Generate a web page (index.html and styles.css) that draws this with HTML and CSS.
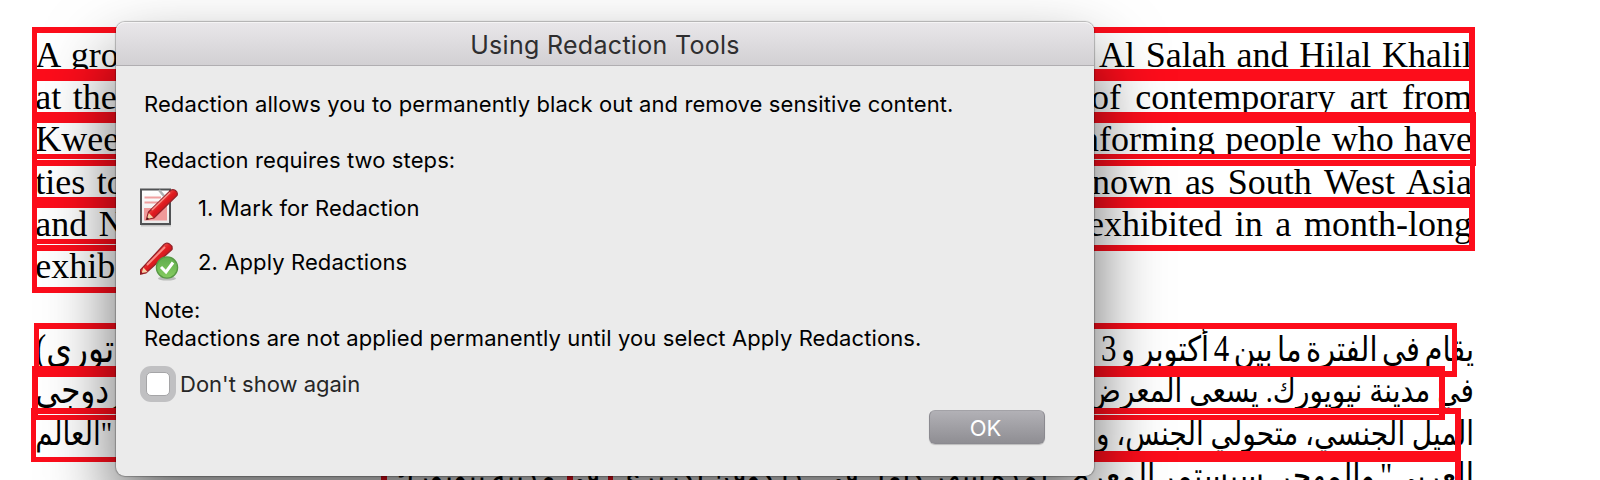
FILE: index.html
```
<!DOCTYPE html>
<html lang="en">
<head>
    <meta charset="UTF-8">
    <meta name="viewport" content="width=device-width, initial-scale=1.0">
    <title>Using Redaction Tools</title>
    <link rel="stylesheet" href="styles.css">
</head>
<body>
    <div class="page">
        <div class="paragraph">
            <div class="line"><span>A gro</span><span class="end end-1">Al Salah and Hilal Khalil</span></div>
            <div class="line"><span>at the</span><span class="end end-2">of contemporary art from</span></div>
            <div class="line"><span>Kwee</span><span class="end end-3">informing people who have</span></div>
            <div class="line"><span>ties to</span><span class="end end-4">known as South West Asia</span></div>
            <div class="line"><span>and N</span><span class="end end-5">exhibited in a month-long</span></div>
            <div class="line"><span>exhib</span></div>
        </div>
        <div class="paragraph arabic" lang="ar" dir="rtl">
            <div class="line"><span class="end ar-1">يقام في الفترة ما بين <span class="num">4</span> أكتوبر و <span class="num">3</span></span><span class="start-1">توري)</span></div>
            <div class="line"><span class="end ar-2">في مدينة نيويورك. يسعى المعرض</span><span>زدوجي</span></div>
            <div class="line"><span class="end ar-3">الميل الجنسي، متحولي الجنس، و</span><span class="start-3">"العالم</span></div>
            <div class="line"><span class="end ar-4">العربي" والمهجر. سيستمر المعرض لمدة شهر كامل في "ذا كوفن إكزبري" في مدينة نيويورك</span></div>
        </div>

        <!-- redaction marks -->
        <div class="mark mark-1"></div>
        <div class="mark mark-2"></div>
        <div class="mark mark-3"></div>
        <div class="mark mark-4"></div>
        <div class="mark mark-5"></div>
        <div class="mark mark-6"></div>
        <div class="mark mark-7"></div>
        <div class="mark mark-8"></div>
        <div class="mark mark-9"></div>
        <div class="mark mark-10"></div>
        <div class="mark mark-11"></div>
    </div>

    <div class="dialog">
        <div class="titlebar">Using Redaction Tools</div>
        <div class="content">
            <p class="intro">Redaction allows you to permanently black out and remove sensitive content.</p>
            <p class="steps-title">Redaction requires two steps:</p>
            <div class="step">
                <svg class="icon" width="40" height="40" viewBox="0 0 40 40">
                    <defs>
                        <linearGradient id="paper" x1="0" y1="0" x2="0" y2="1">
                            <stop offset="0" stop-color="#ffffff"/>
                            <stop offset="1" stop-color="#e9e9e9"/>
                        </linearGradient>
                        <linearGradient id="pencil" x1="0" y1="0" x2="1" y2="1">
                            <stop offset="0" stop-color="#c8202a"/>
                            <stop offset="0.35" stop-color="#f0574f"/>
                            <stop offset="0.5" stop-color="#e01b20"/>
                            <stop offset="1" stop-color="#8e0d14"/>
                        </linearGradient>
                    </defs>
                    <path d="M1 37.5h30" stroke="#c4c4c4" stroke-width="2"/>
                    <rect x="1" y="1.5" width="29" height="34.5" fill="url(#paper)" stroke="#505254" stroke-width="2"/>
                    <path d="M4.500 9.500H21M4.500 14.500H18" stroke="#f0a0a0" stroke-width="1.800"/>
                    <path d="M4 20h12l11 -3v15.500H4z" fill="#ef9a9a"/>
                    <path d="M19 2l5 6" stroke="#aeb2b4" stroke-width="2.500"/>
                    <path d="M6.500 31.500l2-7.500L30.500 2.500c3-2.500 8 1 6.500 5L14 30z" fill="url(#pencil)" stroke="#94232a" stroke-width="1.300"/>
                    <path d="M12 22L30 4.500" stroke="#f98d86" stroke-width="1.600"/>
                    <path d="M7 31l1.800-6 4.500 4.500z" fill="#f3d3a8"/>
                    <path d="M6.500 31.800l0.800-2.500 1.800 1.600z" fill="#3d1a15"/>
                </svg>
                <span>1. Mark for Redaction</span>
            </div>
            <div class="step">
                <svg class="icon" width="40" height="40" viewBox="0 0 40 40">
                    <defs>
                        <linearGradient id="badge" x1="0" y1="0" x2="0" y2="1">
                            <stop offset="0" stop-color="#5fac4c"/>
                            <stop offset="1" stop-color="#86cc60"/>
                        </linearGradient>
                    </defs>
                    <path d="M0.500 32v-4L24 2.500c3-3 9 0 8 5L6 31z" fill="url(#pencil)" stroke="#94232a" stroke-width="1.300"/>
                    <path d="M7 23L25 5" stroke="#f98d86" stroke-width="1.800"/>
                    <path d="M1.500 31l2-5.500 4 4.500z" fill="#f3d3a8"/>
                    <path d="M0 32.500v-4l3.500 3.500z" fill="#8e1820"/>
                    <ellipse cx="27" cy="36.500" rx="9" ry="2" fill="#b9bbb9"/>
                    <circle cx="27" cy="25.500" r="10.600" fill="url(#badge)" stroke="#579844" stroke-width="1.300"/>
                    <path d="M21 25l5 5 7-9.500" fill="none" stroke="#ffffff" stroke-width="3"/>
                </svg>
                <span>2. Apply Redactions</span>
            </div>
            <p class="note-title">Note:</p>
            <p class="note">Redactions are not applied permanently until you select Apply Redactions.</p>
            <label class="option"><input type="checkbox" class="checkbox"><span>Don't show again</span></label>
            <div class="actions">
                <button class="ok-btn">OK</button>
            </div>
        </div>
    </div>
</body>
</html>
```
FILE: styles.css
```
* {
    margin: 0;
    padding: 0;
    box-sizing: border-box;
}

body {
    position: relative;
    width: 1600px;
    height: 480px;
    overflow: hidden;
    background: #fff;
    font-family: Inter, "Liberation Sans", sans-serif;
    color: #000;
}

.page {
    position: relative;
    width: 1600px;
    height: 480px;
    padding: 33.9px 128px 0 35.3px;
    overflow: hidden;
    font-family: "Liberation Serif", "DejaVu Sans", serif;
    font-size: 36px;
    line-height: 42.3px;
}

.paragraph {
    margin-bottom: 42.3px;
}

.line {
    display: flex;
    justify-content: space-between;
    height: 42.3px;
    white-space: nowrap;
    word-spacing: 2.500px;
}

.end {
    text-align: justify;
    text-align-last: justify;
    white-space: normal;
    word-spacing: -4px;
}

.end-1 { width: 373px; }
.end-2 { width: 381px; }
.end-3 { width: 401px; }
.end-4 { width: 398px; }
.end-5 { width: 384px; }

.arabic {
    margin-right: -2px;
    font-size: 31px;
}

/* taller, narrower arabic letters */
.arabic .line {
    word-spacing: 0;
    transform: scaleY(1.2);
    transform-origin: 0 32px;
}

.arabic .end {
    word-spacing: -6px;
}

.num {
    font-size: 31px;
}

.ar-1 { width: 373px; font-size: 29px; }
.ar-2 { width: 387px; font-size: 28px; }
.ar-3 { width: 378px; font-size: 28px; }
.ar-4 { width: 1084px; font-size: 30px; }
.start-1 { font-size: 33px; }
.start-3 { font-size: 28px; }

/* Redaction marks */
.mark {
    position: absolute;
    left: 32px;
    width: 1443px;
    height: 54px;
    border: 6px solid #fd0d1b;
    border-left-width: 5px;
}

.mark-1 { top: 27px; }
.mark-2 { top: 69px; }
.mark-3 { top: 112px; width: 1444px; }
.mark-4 { top: 154px; border-width: 5px 5px 6px; }
.mark-5 { top: 197px; }
.mark-6 { top: 239px; width: 300px; border-top-width: 5px; }
.mark-7 { top: 323px; left: 34px; width: 1423px; border-right-width: 5px; }
.mark-8 { top: 366px; width: 1413px; border-width: 5px 6px; }
.mark-9 { top: 408px; left: 31px; width: 1430px; border-bottom-width: 5px; }
.mark-10 { top: 451px; left: 608px; width: 853px; }
.mark-11 { top: 451px; left: 381px; width: 192px; border-left-width: 6px; }

/* Dialog */
.dialog {
    position: absolute;
    left: 116px;
    top: 22px;
    width: 978px;
    height: 454px;
    border-radius: 9px;
    background: #ebebeb;
    box-shadow: 0 0 1px 1px rgba(0, 0, 0, 0.25), 0 36px 70px rgba(0, 0, 0, 0.6);
    font-size: 22px;
    line-height: 28px;
    letter-spacing: 0.1px;
}

.titlebar {
    height: 44px;
    border-bottom: 1px solid #b0aeb1;
    border-radius: 9px 9px 0 0;
    background: linear-gradient(#e9e7ea, #d2d0d3);
    box-shadow: inset 0 1px 0 #f5f4f5;
    color: #2e2e2f;
    font-size: 25px;
    letter-spacing: 0.3px;
    line-height: 47px;
    text-align: center;
}

.content {
    padding: 24px 49px 0 28px;
    white-space: nowrap;
}

.steps-title {
    margin-top: 28px;
}

.step {
    display: flex;
    align-items: center;
    gap: 18px;
    height: 54px;
    margin-left: -4px;
}

.steps-title + .step {
    margin-top: 7px;
}

.icon {
    flex: none;
    display: block;
}

.note-title {
    margin-top: 7px;
}

.option {
    display: flex;
    align-items: center;
    gap: 10px;
    margin: 18px 0 0 2px;
    color: #262626;
    letter-spacing: 0;
}

.checkbox {
    appearance: none;
    width: 24px;
    height: 24px;
    border: 1px solid #a5a5a7;
    border-radius: 5px;
    background: #fff;
    box-shadow: 0 0 0 6px #c0c0c2;
}

.actions {
    display: flex;
    justify-content: flex-end;
    margin-top: 12px;
}

.ok-btn {
    width: 116px;
    height: 34px;
    padding: 1px 3px 0 0;
    border: 1px solid #8b8a90;
    border-top-color: #a3a2a7;
    border-radius: 6px;
    background: linear-gradient(#b2b1b6, #8f8e93);
    box-shadow: 0 1px 1px rgba(0, 0, 0, 0.2);
    color: #fff;
    font-family: inherit;
    font-size: 22px;
    line-height: 32px;
}
```
